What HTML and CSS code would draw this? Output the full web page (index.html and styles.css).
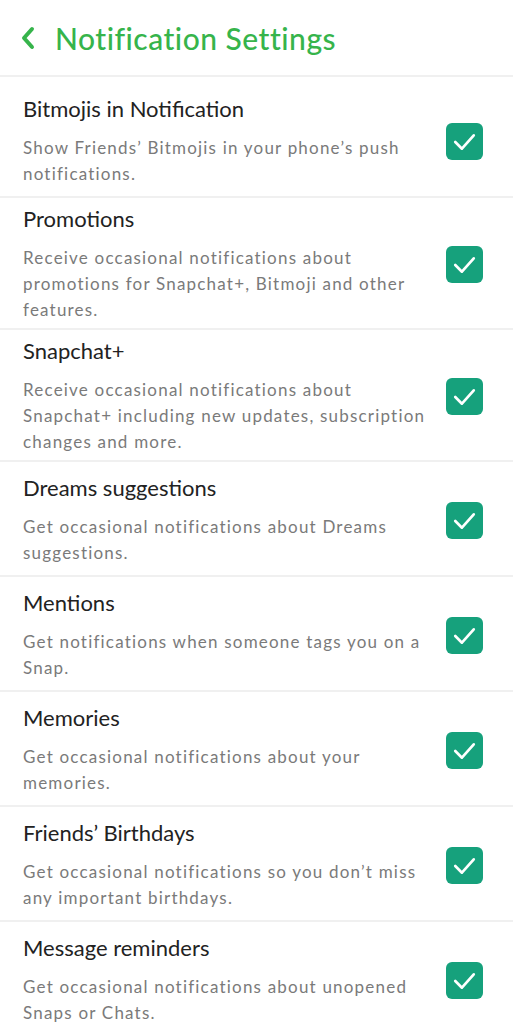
FILE: index.html
```html
<!DOCTYPE html>
<html lang="en">
<head>
    <meta charset="UTF-8">
    <meta name="viewport" content="width=device-width, initial-scale=1.0">
    <title>Notification Settings</title>
    <link rel="stylesheet" href="styles.css">
</head>
<body>

    <div class="header">
        <svg class="back" width="16" height="24" viewBox="0 0 16 24">
            <path d="M12 3 L4 12 L12 21" fill="none" stroke="#36b44b" stroke-width="4" stroke-linecap="round" stroke-linejoin="round"/>
        </svg>
        <h1>Notification Settings</h1>
    </div>

    <div class="list">
        <div class="item first">
            <div class="text">
                <div class="title">Bitmojis in Notification</div>
                <div class="desc">Show Friends’ Bitmojis in your phone’s push notifications.</div>
            </div>
            <div class="check"><svg viewBox="0 0 36 36"><path d="M9 18.5 L15.5 25 L27 12" /></svg></div>
        </div>
        <div class="item">
            <div class="text">
                <div class="title">Promotions</div>
                <div class="desc">Receive occasional notifications about promotions for Snapchat+, Bitmoji and other features.</div>
            </div>
            <div class="check"><svg viewBox="0 0 36 36"><path d="M9 18.5 L15.5 25 L27 12" /></svg></div>
        </div>
        <div class="item">
            <div class="text">
                <div class="title">Snapchat+</div>
                <div class="desc">Receive occasional notifications about Snapchat+ including new updates, subscription changes and more.</div>
            </div>
            <div class="check"><svg viewBox="0 0 36 36"><path d="M9 18.5 L15.5 25 L27 12" /></svg></div>
        </div>
        <div class="item">
            <div class="text">
                <div class="title">Dreams suggestions</div>
                <div class="desc">Get occasional notifications about Dreams suggestions.</div>
            </div>
            <div class="check"><svg viewBox="0 0 36 36"><path d="M9 18.5 L15.5 25 L27 12" /></svg></div>
        </div>
        <div class="item">
            <div class="text">
                <div class="title">Mentions</div>
                <div class="desc">Get notifications when someone tags you on a Snap.</div>
            </div>
            <div class="check"><svg viewBox="0 0 36 36"><path d="M9 18.5 L15.5 25 L27 12" /></svg></div>
        </div>
        <div class="item">
            <div class="text">
                <div class="title">Memories</div>
                <div class="desc">Get occasional notifications about your memories.</div>
            </div>
            <div class="check"><svg viewBox="0 0 36 36"><path d="M9 18.5 L15.5 25 L27 12" /></svg></div>
        </div>
        <div class="item">
            <div class="text">
                <div class="title">Friends’ Birthdays</div>
                <div class="desc">Get occasional notifications so you don’t miss any important birthdays.</div>
            </div>
            <div class="check"><svg viewBox="0 0 36 36"><path d="M9 18.5 L15.5 25 L27 12" /></svg></div>
        </div>
        <div class="item">
            <div class="text">
                <div class="title">Message reminders</div>
                <div class="desc">Get occasional notifications about unopened Snaps or Chats.</div>
            </div>
            <div class="check"><svg viewBox="0 0 36 36"><path d="M9 18.5 L15.5 25 L27 12" /></svg></div>
        </div>
    </div>

</body>
</html>
```

FILE: styles.css
```css
body {
    font-family: Lato, "Open Sans", sans-serif;
    margin: 0;
    padding: 0;
    background-color: #fff;
    color: #222;
}
.header {
    display: flex;
    align-items: center;
    height: 77px;
    padding-left: 20px;
    border-bottom: 2px solid #f0f0f0;
    box-sizing: border-box;
}
.back {
    display: block;
    margin-right: 19px;
}
.header h1 {
    margin: 0;
    font-size: 30px;
    font-weight: 500;
    color: #36b44b;
    letter-spacing: 0.5px;
}
.item {
    display: flex;
    align-items: center;
    box-sizing: border-box;
    min-height: 115px;
    padding: 8px 30px 5px 23px;
    border-bottom: 2px solid #f0f0f0;
}
.item.first {
    min-height: 121px;
    padding-top: 14px;
}
.text {
    flex: 1;
    padding-right: 14px;
}
.title {
    font-size: 22px;
    line-height: 26px;
    color: #222;
}
.desc {
    margin-top: 13px;
    font-size: 17px;
    line-height: 26px;
    color: #7a7a7a;
    letter-spacing: 1.2px;
}
.check {
    width: 37px;
    height: 37px;
    border-radius: 6px;
    background-color: #16a17c;
    flex-shrink: 0;
}
.check svg {
    display: block;
    width: 37px;
    height: 37px;
}
.check path {
    fill: none;
    stroke: #fff;
    stroke-width: 2.6;
    stroke-linecap: round;
    stroke-linejoin: round;
}
```
